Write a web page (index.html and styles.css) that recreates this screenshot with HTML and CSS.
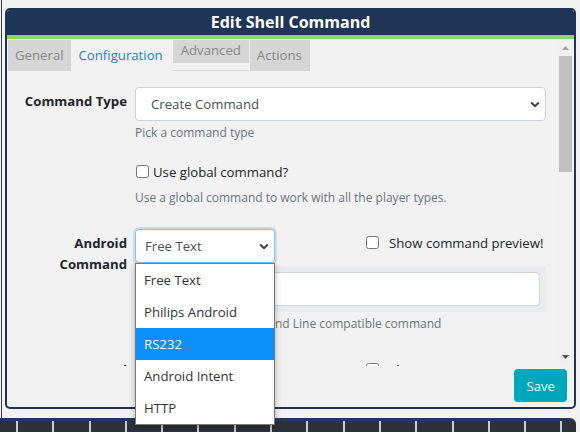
FILE: index.html
```html
<!DOCTYPE html>
<html>
<head>
<meta charset="utf-8">
<link rel="stylesheet" href="styles.css">
</head>
<body>
<div class="screen">
  <div class="page">
    <div class="modal">
      <div class="modal-header">Edit Shell Command</div>
      <div class="modal-body">
        <div class="content">
          <div class="tabs">
            <div class="tab tab-first">General</div>
            <div class="tab active">Configuration</div>
            <div class="tab tab-raised"><span class="tab-box">Advanced</span></div>
            <div class="tab">Actions</div>
          </div>
          <div class="form">
            <div class="row">
              <div class="label">Command Type</div>
              <div class="control">
                <div class="select select-wide">
                  <span>Create Command</span>
                  <svg class="chev" width="10" height="7" viewBox="0 0 10 7"><path d="M1.2 1.5 5 5.2 8.8 1.5" fill="none" stroke="#3b3f44" stroke-width="2"/></svg>
                </div>
                <div class="help">Pick a command type</div>
              </div>
            </div>
            <div class="row row-tight">
              <div class="label"></div>
              <div class="control">
                <label class="check"><input type="checkbox"><span>Use global command?</span></label>
                <div class="help help-gap">Use a global command to work with all the player types.</div>
              </div>
            </div>
            <div class="row">
              <div class="label">Android Command</div>
              <div class="control">
                <div class="split">
                  <div class="select select-small focus">
                    <span>Free Text</span>
                    <svg class="chev" width="10" height="7" viewBox="0 0 10 7"><path d="M1.2 1.5 5 5.2 8.8 1.5" fill="none" stroke="#3b3f44" stroke-width="2"/></svg>
                  </div>
                  <label class="check check-wide"><input type="checkbox"><span>Show command preview!</span></label>
                </div>
                <div class="input-group"><div class="input"></div></div>
                <div class="help">Enter a standard Command Line compatible command</div>
              </div>
            </div>
            <div class="row row-low">
              <div class="label">Name Command</div>
              <div class="control">
                <div class="split">
                  <div class="select select-small"><span>None</span></div>
                  <label class="check check-wide"><input type="checkbox"><span>Show name!</span></label>
                </div>
              </div>
            </div>
          </div>
        </div>
        <div class="scrollbar">
          <div class="sb-btn">
            <svg width="15" height="15" viewBox="0 0 15 15"><path d="M4 10h7L7.5 6z" fill="#a3a3a3"/></svg>
          </div>
          <div class="sb-track"><div class="sb-thumb"></div></div>
          <div class="sb-btn">
            <svg width="15" height="15" viewBox="0 0 15 15"><path d="M4 4h7L7.5 8z" fill="#505050"/></svg>
          </div>
        </div>
      </div>
      <div class="modal-footer">
        <button class="save">Save</button>
      </div>
    </div>
  </div>
  <div class="bottom-bar">
    <span class="cell"></span><span class="cell"></span><span class="cell"></span><span class="cell"></span>
    <span class="cell"></span><span class="cell"></span><span class="cell"></span><span class="cell"></span>
    <span class="cell"></span><span class="cell"></span><span class="cell"></span><span class="cell"></span>
    <span class="cell"></span><span class="cell"></span><span class="cell"></span><span class="cell"></span>
  </div>
  <div class="dropdown">
    <div class="option">Free Text</div>
    <div class="option">Philips Android</div>
    <div class="option selected">RS232</div>
    <div class="option">Android Intent</div>
    <div class="option">HTTP</div>
  </div>
</div>
</body>
</html>
```
FILE: styles.css
```css
* { box-sizing: border-box; }
html, body { margin: 0; padding: 0; }
body {
  background: #f2f2f2;
  font-family: "Open Sans", "Noto Sans", sans-serif;
  font-size: 13.2px;
  color: #212529;
  width: 580px;
  height: 432px;
  overflow: hidden;
}
.screen { position: relative; width: 580px; height: 432px; }
.page {
  margin-left: 1px;
  border-left: 1px solid #3a3a3a;
  height: 418px;
  padding-top: 8px;
  padding-left: 3px;
}
.modal {
  width: 571px;
  border: 2px solid #1f3557;
  border-radius: 5px;
  background: #f2f2f2;
  overflow: hidden;
}
.modal-header {
  background: #1f3557;
  color: #fff;
  font-weight: 700;
  font-size: 16px;
  text-align: center;
  height: 29px;
  line-height: 24px;
  border-bottom: 4px solid #8ed661;
}
.modal-body {
  margin: 1px 1px 0 1px;
  height: 326px;
  display: flex;
}
.content { flex: 1; overflow: hidden; }
.scrollbar {
  width: 15px;
  display: flex;
  flex-direction: column;
  background: #f1f1f1;
}
.sb-btn { height: 15px; }
.sb-btn svg { display: block; }
.sb-track { flex: 1; padding: 1px 1px 0 1px; }
.sb-thumb { height: 116px; background: #c1c1c1; }
.tabs { display: flex; align-items: flex-start; height: 31px; }
.tab {
  height: 31px;
  line-height: 31px;
  padding: 0 8px 0 7px;
  background: #d6d6d6;
  color: #878787;
  margin-right: 1px;
}
.tab-first { padding: 0 7px; margin-right: 0; }
.tab.active { background: transparent; color: #1b80c3; padding: 0 9px 0 8px; margin-right: 1px; }
.tab-raised {
  background: transparent;
  padding: 0;
  border-bottom: 1px solid #dcdcdc;
}
.tab-box {
  display: block;
  height: 23px;
  line-height: 21px;
  padding: 0 8px;
  background: #d6d6d6;
}
.form { padding: 16px 12px 40px 0; }
.row { display: grid; grid-template-columns: 127px 1fr; margin-top: 22px; }
.row:first-child { margin-top: 0; }
.row-tight { margin-top: 19px; }
.row-low { margin-top: 23px; }
.label {
  text-align: right;
  font-weight: 700;
  padding: 4px 8px 0 0;
  line-height: 21px;
  color: #212529;
}
.select {
  display: flex;
  align-items: center;
  justify-content: space-between;
  background: #fff;
  border: 1px solid #ced4da;
  border-radius: 4px;
  color: #495057;
  height: 34px;
}
.select-wide { padding: 0 5px 0 15px; }
.select-small { width: 140px; padding: 0 5px 0 9px; }
.select.focus { border-color: #8fc3ec; box-shadow: 0 0 0 2px rgba(120, 180, 230, 0.35); }
.help {
  font-size: 12px;
  line-height: 18px;
  color: #6c757d;
  margin-top: 3px;
}
.help-gap { margin-top: 7px; }
.check {
  display: flex;
  align-items: center;
  height: 21px;
  color: #212529;
}
.check input {
  width: 13px;
  height: 13px;
  margin: 0 4px 0 1px;
}
.split { display: grid; grid-template-columns: 231px 1fr; align-items: start; }
.check-wide { margin-top: 3px; }
.check-wide input { margin: 0 10px 0 0; }
.input-group {
  margin-top: 3px;
  background: #e9ecef;
  padding: 6px;
  height: 46px;
}
.input {
  background: #fff;
  border: 1px solid #ced4da;
  border-radius: 4px;
  height: 34px;
}
.modal-footer {
  display: flex;
  justify-content: flex-end;
  padding: 3px 7px 5px 0;
}
.save {
  background: #00a6bb;
  color: #fff;
  border: none;
  border-radius: 4px;
  font-family: "Open Sans", sans-serif;
  font-size: 13.2px;
  height: 33px;
  padding: 0 12px;
}
.bottom-bar {
  width: 576px;
  height: 14px;
  background: #2c313b;
  border-top: 3px solid #20395b;
  border-top-right-radius: 6px;
  display: flex;
  padding-left: 16px;
}
.cell {
  flex: 0 0 36.3px;
  border-left: 2px solid #c9ccd2;
}
.dropdown {
  position: absolute;
  left: 135px;
  top: 263px;
  width: 140px;
  background: #fff;
  border: 1px solid #7a7a7a;
  box-shadow: 0 2px 6px rgba(0, 0, 0, 0.3);
}
.option {
  height: 32px;
  line-height: 32px;
  padding-left: 8px;
  color: #333;
}
.option.selected { background: #0a8ffb; color: #fff; }
```
